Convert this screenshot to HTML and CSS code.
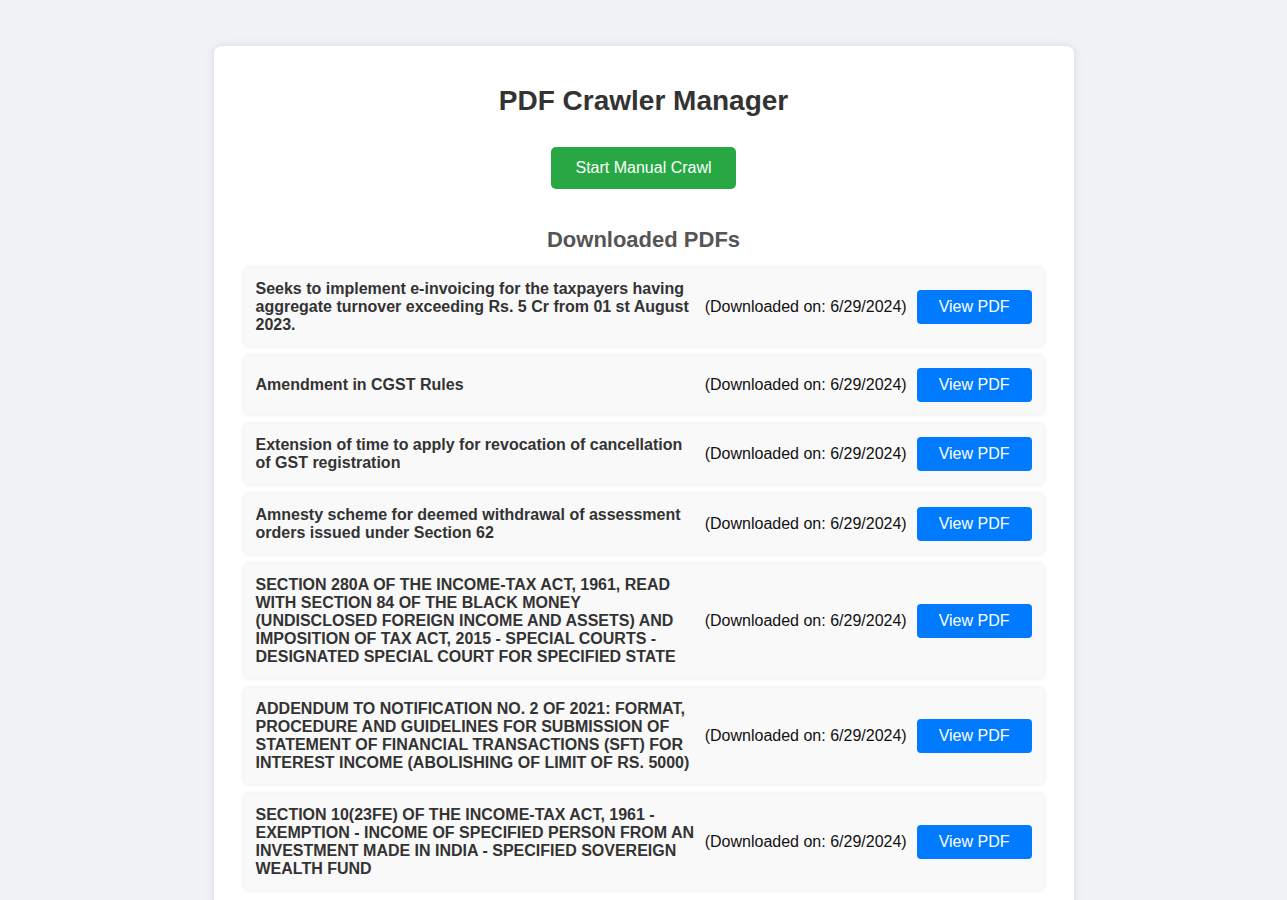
FILE: index.html
```html
<!DOCTYPE html>
<html lang="en">
<head>
<meta charset="utf-8">
<title>PDF Crawler Manager</title>
<link rel="stylesheet" href="styles.css">
</head>
<body>
<div class="container">
  <h1 class="title">PDF Crawler Manager</h1>
  <div class="actions"><button class="btn-crawl">Start Manual Crawl</button></div>
  <h2 class="subtitle">Downloaded PDFs</h2>
  <ul class="pdf-list">
    <li class="pdf-item"><span class="pdf-title">Seeks to implement e-invoicing for the taxpayers having aggregate turnover exceeding Rs. 5 Cr from 01 st August 2023.</span><span class="pdf-date">(Downloaded on: 6/29/2024)</span><a class="btn-view">View PDF</a></li>
    <li class="pdf-item"><span class="pdf-title">Amendment in CGST Rules</span><span class="pdf-date">(Downloaded on: 6/29/2024)</span><a class="btn-view">View PDF</a></li>
    <li class="pdf-item"><span class="pdf-title">Extension of time to apply for revocation of cancellation of GST registration</span><span class="pdf-date">(Downloaded on: 6/29/2024)</span><a class="btn-view">View PDF</a></li>
    <li class="pdf-item"><span class="pdf-title">Amnesty scheme for deemed withdrawal of assessment orders issued under Section 62</span><span class="pdf-date">(Downloaded on: 6/29/2024)</span><a class="btn-view">View PDF</a></li>
    <li class="pdf-item"><span class="pdf-title">SECTION 280A OF THE INCOME-TAX ACT, 1961, READ WITH SECTION 84 OF THE BLACK MONEY (UNDISCLOSED FOREIGN INCOME AND ASSETS) AND IMPOSITION OF TAX ACT, 2015 - SPECIAL COURTS - DESIGNATED SPECIAL COURT FOR SPECIFIED STATE</span><span class="pdf-date">(Downloaded on: 6/29/2024)</span><a class="btn-view">View PDF</a></li>
    <li class="pdf-item"><span class="pdf-title">ADDENDUM TO NOTIFICATION NO. 2 OF 2021: FORMAT, PROCEDURE AND GUIDELINES FOR SUBMISSION OF STATEMENT OF FINANCIAL TRANSACTIONS (SFT) FOR INTEREST INCOME (ABOLISHING OF LIMIT OF RS. 5000)</span><span class="pdf-date">(Downloaded on: 6/29/2024)</span><a class="btn-view">View PDF</a></li>
    <li class="pdf-item"><span class="pdf-title">SECTION 10(23FE) OF THE INCOME-TAX ACT, 1961 - EXEMPTION - INCOME OF SPECIFIED PERSON FROM AN INVESTMENT MADE IN INDIA - SPECIFIED SOVEREIGN WEALTH FUND</span><span class="pdf-date">(Downloaded on: 6/29/2024)</span><a class="btn-view">View PDF</a></li>
  </ul>
</div>
</body>
</html>
```

FILE: styles.css
```css
html, body {
  margin: 0;
  padding: 0;
}
body {
  background: #f0f2f5;
  font-family: "Liberation Sans", Arial, sans-serif;
  color: #333;
  padding-top: 46px;
}
.container {
  width: 800px;
  margin: 0 auto;
  background: #fff;
  padding: 20px 30px 30px;
  border-radius: 8px;
  box-shadow: 0 0 10px rgba(0, 0, 0, 0.1);
}
.title {
  font-size: 28px;
  font-weight: bold;
  text-align: center;
  color: #333;
  margin: 19px 0 0;
  line-height: 32px;
}
.actions {
  text-align: center;
  margin-top: 30px;
}
.btn-crawl {
  font-family: "Liberation Sans", Arial, sans-serif;
  font-size: 16px;
  line-height: 18px;
  background: #28a745;
  color: #fff;
  border: none;
  border-radius: 5px;
  padding: 12px 24px;
  cursor: pointer;
}
.subtitle {
  font-size: 22px;
  font-weight: bold;
  text-align: center;
  color: #555;
  margin: 38px 0 0;
  line-height: 26px;
}
.pdf-list {
  list-style: none;
  margin: 15px 0 0;
  padding: 0;
}
.pdf-item {
  display: flex;
  align-items: center;
  background: #f9f9f9;
  border-radius: 5px;
  box-shadow: 0 0 5px rgba(0, 0, 0, 0.1);
  padding: 12px;
  margin-bottom: 10px;
}
.pdf-title {
  flex: 1;
  font-weight: bold;
  font-size: 16px;
  line-height: 18px;
  color: #333;
}
.pdf-date {
  font-size: 16px;
  line-height: 18px;
  color: #111;
  margin: 0 10px;
}
.btn-view {
  display: inline-block;
  background: #007bff;
  color: #fff;
  font-size: 16px;
  line-height: 18px;
  padding: 8px 22px;
  border-radius: 4px;
  text-decoration: none;
}
```
